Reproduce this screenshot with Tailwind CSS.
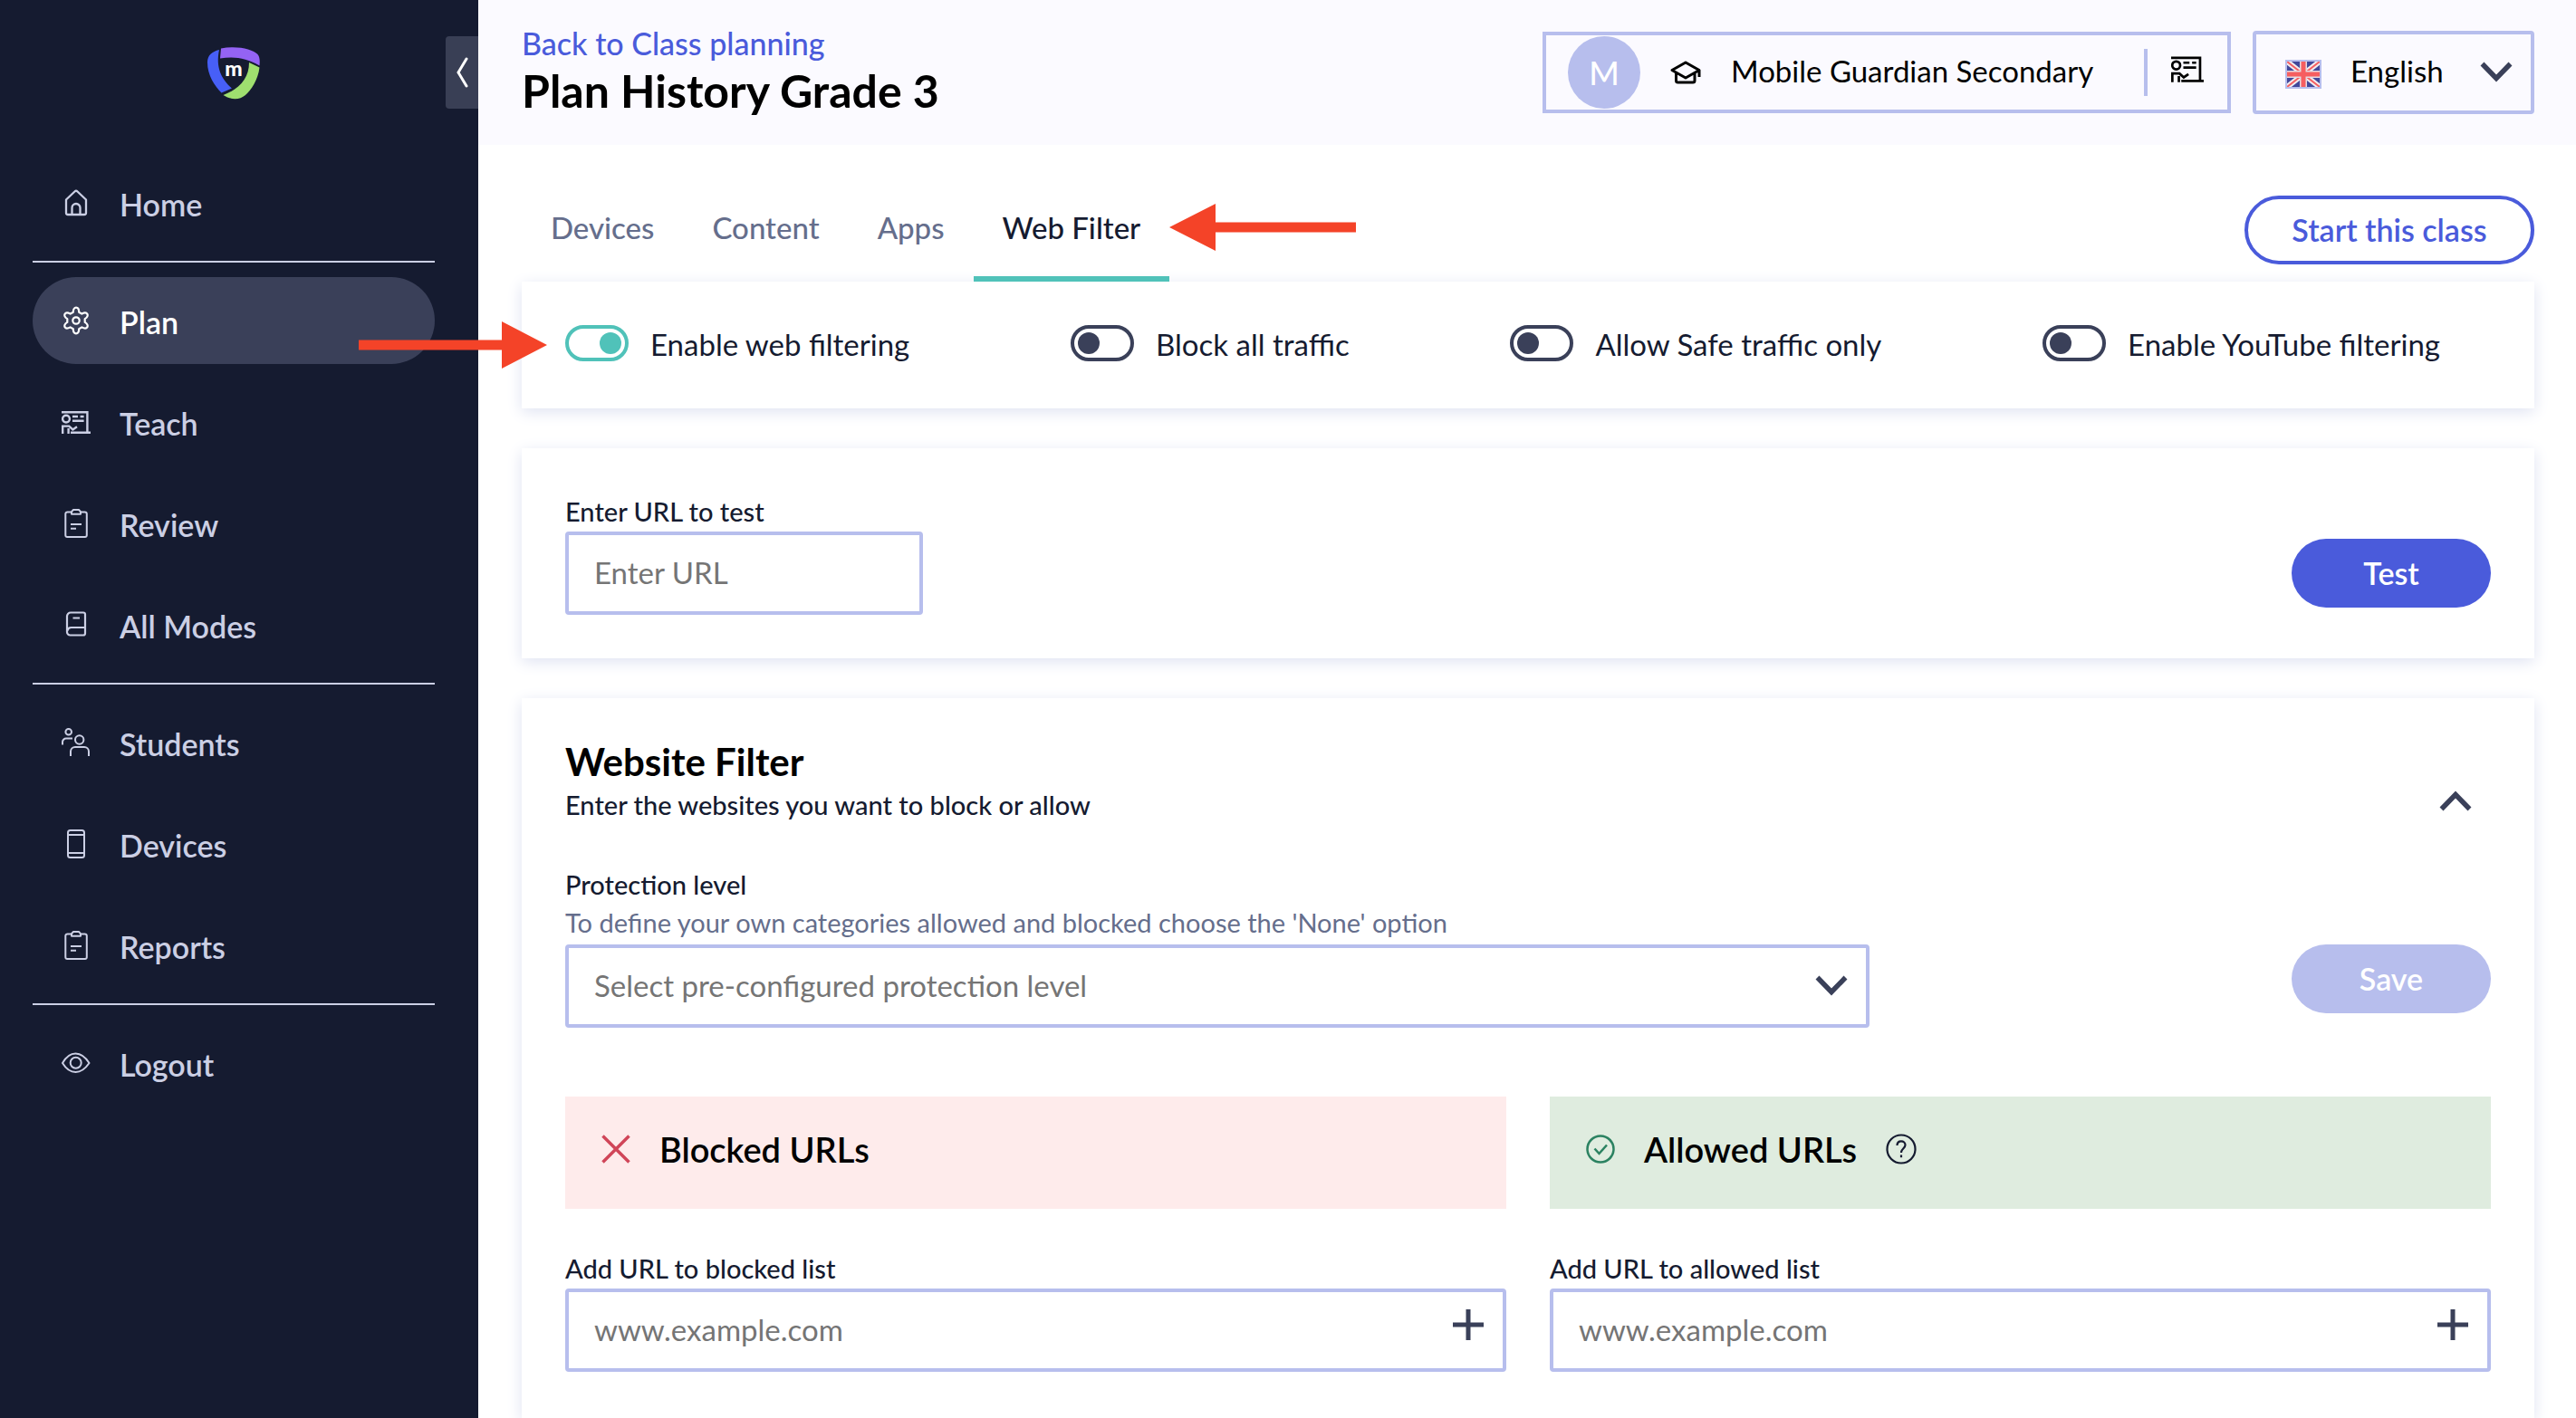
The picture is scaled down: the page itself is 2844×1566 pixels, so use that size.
<!DOCTYPE html>
<html lang="en">
<head>
  <meta charset="UTF-8" />
  <meta name="viewport" content="width=device-width, initial-scale=1.0">
  <title>Plan History Grade 3</title>
  <script src="https://cdn.jsdelivr.net/npm/@tailwindcss/browser@4"></script>
</head>
<body class="flex min-h-screen bg-white font-['Lato',sans-serif] text-[33px] leading-[44px] text-[#151b30]">

  <!-- shared icons -->
  <svg class="hidden">
    <symbol id="icon-teach" viewBox="0 0 32 32">
      <g fill="none" stroke="currentColor" stroke-width="2.4">
        <path d="M0 5.2H28.4V28M10 27.8H32" />
        <circle cx="5" cy="12.6" r="3.9" />
        <path d="M1.2 29V20.6H8.2L12.4 24.4 17 21.2M7.6 29V23M12 10H18M20.6 10H24.6M12 14.8H24.6" />
      </g>
    </symbol>
    <symbol id="icon-clipboard" viewBox="0 0 32 32">
      <g fill="none" stroke="currentColor" stroke-width="2" stroke-linejoin="round">
        <path d="M10.5 3.4H6.5a2.2 2.2 0 0 0-2.200 2.200V29.200a1.800 1.800 0 0 0 1.800 1.800H26a1.800 1.800 0 0 0 1.800-1.800V5.600a2.200 2.200 0 0 0-2.200-2.200H21.500" />
        <path d="M11 5.8V3.200L13 1H19L21 3.200V5.800Z" />
        <path d="M10 17H22M10 21.8H16" />
      </g>
    </symbol>
    <symbol id="icon-chevron" viewBox="0 0 36 24">
      <path d="M2.5 3.5L18 19.500 33.500 3.500" fill="none" stroke="currentColor" stroke-width="5.5" />
    </symbol>
  </svg>

  <aside class="w-[528px] shrink-0 bg-[#151b30] text-[#cbcfe4]">
    <div class="flex h-40 justify-end pt-10">
      <a href="#" aria-label="Mobile Guardian" class="mx-auto pt-3 pl-6">
        <svg class="h-[58px] w-[58px]" viewBox="0 0 58 58">
          <path fill="#475ff7" d="M13 3C5 5 0 9 0 17 0 31 8 43 15.500 50.500L27 45.500C15 35 9 22 13 3Z" />
          <path fill="#9463f4" d="M15 1.500C32-2 50 2 55.500 8 58 11 58 16 57.500 20.500 43 12 30 10 14 12.500Z" />
          <path fill="#9fdf6f" d="M46 17L57.500 22.500C56 36 48 48 42 53 35 59 25 58 17.500 53 36 46 46 34 46 17Z" />
          <text x="29" y="31.5" text-anchor="middle" font-size="23" font-weight="900" fill="#fff">m</text>
        </svg>
      </a>
      <button type="button" aria-label="Collapse menu" class="flex h-20 w-9 items-center justify-center rounded-l bg-[#393f55] text-white">
        <svg class="h-9 w-4" viewBox="0 0 16 36"><path d="M13 3L4 18 13 33" fill="none" stroke="currentColor" stroke-width="3" stroke-linecap="round" /></svg>
      </button>
    </div>

    <nav class="flex flex-col gap-4 pl-9 pr-12 pt-4 text-[34px] font-semibold">
      <a href="#" class="flex h-24 items-center gap-8 rounded-full px-8">
        <svg class="size-8" viewBox="0 0 32 32" fill="none" stroke="currentColor" stroke-width="2.3" stroke-linejoin="round">
          <path d="M5 12.5L14.500 3.500a2.200 2.200 0 0 1 3 0L27 12.500V27a2 2 0 0 1-2 2H7a2 2 0 0 1-2-2Z" />
          <path d="M11.5 29V21.500a4.500 4.500 0 0 1 9 0V29" />
        </svg>
        <span class="pt-1">Home</span>
      </a>
      <hr class="border-t-2 border-[#cbcfe4]">
      <a href="#" aria-current="page" class="flex h-24 items-center gap-8 rounded-full bg-[#3a4059] px-8 text-white">
        <svg class="size-8" viewBox="0 0 32 32" fill="none" stroke="currentColor" stroke-width="2.2" stroke-linejoin="round">
          <path d="M12.8 6.700C12.800 0 19.200 0 19.200 6.700L22.400 8.600C28.300 5.200 31.500 10.800 25.700 14.100V17.900C31.500 21.200 28.300 26.800 22.400 23.400L19.200 25.300C19.200 32 12.800 32 12.800 25.300L9.600 23.400C3.700 26.800 .5 21.200 6.300 17.900V14.100C.5 10.800 3.700 5.200 9.600 8.600Z" />
          <circle cx="16" cy="16" r="3.7" />
        </svg>
        <span class="pt-1">Plan</span>
      </a>
      <a href="#" class="flex h-24 items-center gap-8 rounded-full px-8">
        <svg class="size-8"><use href="#icon-teach" /></svg>
        <span class="pt-1">Teach</span>
      </a>
      <a href="#" class="flex h-24 items-center gap-8 rounded-full px-8">
        <svg class="size-8"><use href="#icon-clipboard" /></svg>
        <span class="pt-1">Review</span>
      </a>
      <a href="#" class="flex h-24 items-center gap-8 rounded-full px-8">
        <svg class="size-8" viewBox="0 0 32 32" fill="none" stroke="currentColor" stroke-width="2.2" stroke-linejoin="round">
          <path d="M10 2.5H24a2 2 0 0 1 2 2V25.500a2 2 0 0 1-2 2H9.500A3.500 3.500 0 0 1 6 24V6.500A4 4 0 0 1 10 2.500Z" />
          <path d="M6.5 22.500C7 19.500 8.500 19 10.500 19H26M12.500 8.500H20" />
        </svg>
        <span class="pt-1">All Modes</span>
      </a>
      <hr class="border-t-2 border-[#cbcfe4]">
      <a href="#" class="flex h-24 items-center gap-8 rounded-full px-8">
        <svg class="size-8" viewBox="0 0 32 32" fill="none" stroke="currentColor" stroke-width="2">
          <circle cx="7.7" cy="4.3" r="3.3" />
          <circle cx="19.7" cy="13" r="4.7" />
          <path d="M1 18.5V15.500a4 4 0 0 1 4-4H12M10 31V26a5 5 0 0 1 5-5H25a5 5 0 0 1 5 5V31" />
        </svg>
        <span class="pt-1">Students</span>
      </a>
      <a href="#" class="flex h-24 items-center gap-8 rounded-full px-8">
        <svg class="size-8" viewBox="0 0 32 32" fill="none" stroke="currentColor" stroke-width="2">
          <rect x="7" y="1" width="18" height="30" rx="2.5" />
          <path d="M7 6H25M7 26H25" />
        </svg>
        <span class="pt-1">Devices</span>
      </a>
      <a href="#" class="flex h-24 items-center gap-8 rounded-full px-8">
        <svg class="size-8"><use href="#icon-clipboard" /></svg>
        <span class="pt-1">Reports</span>
      </a>
      <hr class="border-t-2 border-[#cbcfe4]">
      <a href="#" class="flex h-24 items-center gap-8 rounded-full px-8">
        <svg class="size-8" viewBox="0 0 32 32" fill="none" stroke="currentColor" stroke-width="2" stroke-linejoin="round">
          <path d="M1 16C5 9 10 5.500 15.500 5.500S26 9 30.500 16C26 22.500 21 26 15.500 26S5 22.500 1 16Z" />
          <circle cx="15.7" cy="15.8" r="6" />
        </svg>
        <span class="pt-1">Logout</span>
      </a>
    </nav>
  </aside>

  <main class="flex min-w-0 flex-1 flex-col">
    <header class="flex h-40 items-center justify-between bg-[#fbfaff] pl-12 pr-[46px] text-black">
      <div class="pb-1">
        <a href="#" class="block text-[34px] font-medium text-[#4a5bdb]">Back to Class planning</a>
        <h1 class="text-[50px] font-bold leading-[60px]">Plan History Grade 3</h1>
      </div>
      <div class="flex items-center gap-6">
        <div class="flex h-[90px] w-[760px] items-center border-4 border-[#b7beed] pl-6">
          <span class="flex size-20 items-center justify-center rounded-full bg-[#b7beed] text-[36px] font-medium text-white">M</span>
          <svg class="ml-8 h-7 w-9" viewBox="0 0 36 28" fill="none" stroke="currentColor" stroke-width="3" stroke-linejoin="round">
            <path d="M18 3L33 11.500 18 20 3 11.500ZM7.500 15V23Q7.500 25 9.500 25H26Q28 25 28 23V15M33 11.500V19" />
          </svg>
          <span class="ml-8 pb-1">Mobile Guardian Secondary</span>
          <a href="#" aria-label="Class" class="ml-auto flex h-[52px] items-center border-l-4 border-[#b7beed] px-[26px] pb-2">
            <svg class="size-9"><use href="#icon-teach" /></svg>
          </a>
        </div>
        <div class="relative">
          <select aria-label="Language" class="block h-[92px] w-[311px] appearance-none rounded border-4 border-[#b7beed] pb-1 pl-[104px]">
            <option>English</option>
          </select>
          <svg class="pointer-events-none absolute left-9 top-8 h-8 w-10" viewBox="0 0 40 32">
            <rect width="40" height="32" fill="#b7beed" />
            <svg x="2" y="2" width="36" height="28" viewBox="0 0 36 28">
              <rect width="36" height="28" fill="#42489a" />
              <path d="M0 0L36 28M36 0L0 28" stroke="#f2ecef" stroke-width="6" />
              <path d="M0 0L36 28M36 0L0 28" stroke="#f55f61" stroke-width="2" />
              <path d="M18 0V28M0 14H36" stroke="#e6dbe1" stroke-width="8" />
              <path d="M18 0V28M0 14H36" stroke="#f65e60" stroke-width="5" />
            </svg>
          </svg>
          <svg class="pointer-events-none absolute right-6 top-[33px] h-6 w-9 text-[#3a4059]"><use href="#icon-chevron" /></svg>
        </div>
      </div>
    </header>

    <div class="flex items-end justify-between pl-12 pr-[46px] pt-14">
      <div class="flex font-medium text-[#656e8c]">
        <a href="#" class="border-b-6 border-transparent px-8 pb-8">Devices</a>
        <a href="#" class="border-b-6 border-transparent px-8 pb-8">Content</a>
        <a href="#" class="border-b-6 border-transparent px-8 pb-8">Apps</a>
        <a href="#" class="relative border-b-6 border-[#50c2b9] px-8 pb-8 text-[#151b30]">
          Web Filter
          <svg class="absolute -top-1 left-full h-[52px] w-[206px]" viewBox="0 0 206 52"><path d="M0 26L51 0V20.500H206V31.500H51V52Z" fill="#f44328" /></svg>
        </a>
      </div>
      <button type="button" class="mb-[19px] h-[76px] w-80 rounded-full border-4 border-[#4a5bdb] text-[34px] font-semibold text-[#4a5bdb]">Start this class</button>
    </div>

    <div class="flex flex-1 flex-col gap-11 pl-12 pr-[46px]">
      <section class="flex justify-between bg-white p-12 pr-[104px] shadow-[0_4px_16px_#dfe3f2]">
        <label class="relative flex gap-6 leading-[42px]">
          <input type="checkbox" checked class="h-10 w-[70px] appearance-none rounded-full border-4 border-[#50c2b9] p-1 before:block before:size-6 before:rounded-full before:bg-[#50c2b9] checked:before:translate-x-[30px]">
          Enable web filtering
          <svg class="absolute -top-1 right-full mr-5 h-[52px] w-[208px]" viewBox="0 0 208 52"><path d="M208 26L158 0V20.500H0V31.500H158V52Z" fill="#f44328" /></svg>
        </label>
        <label class="flex gap-6 leading-[42px]">
          <input type="checkbox" class="h-10 w-[70px] appearance-none rounded-full border-4 border-[#3a4059] p-1 before:block before:size-6 before:rounded-full before:bg-[#3a4059] checked:before:translate-x-[30px]">
          Block all traffic
        </label>
        <label class="flex gap-6 leading-[42px]">
          <input type="checkbox" class="h-10 w-[70px] appearance-none rounded-full border-4 border-[#3a4059] p-1 before:block before:size-6 before:rounded-full before:bg-[#3a4059] checked:before:translate-x-[30px]">
          Allow Safe traffic only
        </label>
        <label class="flex gap-6 pb-[2px] leading-[42px]">
          <input type="checkbox" class="h-10 w-[70px] appearance-none rounded-full border-4 border-[#3a4059] p-1 before:block before:size-6 before:rounded-full before:bg-[#3a4059] checked:before:translate-x-[30px]">
          Enable YouTube filtering
        </label>
      </section>

      <section class="flex items-end justify-between bg-white p-12 shadow-[0_4px_16px_#dfe3f2]">
        <div>
          <label for="test-url" class="block text-[29px] font-medium">Enter URL to test</label>
          <input id="test-url" type="text" placeholder="Enter URL" class="block h-[92px] w-[395px] rounded border-4 border-[#b7beed] px-7 pb-[2px] placeholder:text-[#757575]">
        </div>
        <button type="button" class="mb-2 h-[76px] w-[220px] rounded-full bg-[#4a5bdb] text-[34px] font-semibold text-white">Test</button>
      </section>

      <section class="flex-1 bg-white p-12 shadow-[0_4px_16px_#dfe3f2]">
        <div class="flex items-end justify-between">
          <div>
            <h2 class="text-[42px] font-bold text-black">Website Filter</h2>
            <p class="mt-1 text-[29px] font-medium">Enter the websites you want to block or allow</p>
          </div>
          <button type="button" aria-label="Collapse section" class="flex h-[52px] w-[78px] items-center justify-center text-[#3a4059]">
            <svg class="h-6 w-9 rotate-180"><use href="#icon-chevron" /></svg>
          </button>
        </div>

        <div class="mt-11 flex items-end justify-between">
          <div class="w-[1440px]">
            <label for="protection" class="block text-[29px] font-medium">Protection level</label>
            <p class="mb-1 text-[29px] leading-10 text-[#656e8c]">To define your own categories allowed and blocked choose the 'None' option</p>
            <div class="relative">
              <select id="protection" class="block h-[92px] w-full appearance-none rounded border-4 border-[#b7beed] px-7 pb-[2px] text-[#757575]">
                <option>Select pre-configured protection level</option>
              </select>
              <svg class="pointer-events-none absolute right-6 top-[33px] h-6 w-9 text-[#3a4059]"><use href="#icon-chevron" /></svg>
            </div>
          </div>
          <button type="button" disabled class="mb-4 h-[76px] w-[220px] rounded-full bg-[#b7beed] text-[34px] font-semibold text-white">Save</button>
        </div>

        <div class="mt-19 grid grid-cols-2 gap-12">
          <div>
            <div class="flex items-center bg-[#feebeb] px-10 pt-9 pb-11">
              <svg class="size-8" viewBox="0 0 32 32"><path d="M1.5 1.500L30.500 30.500M30.500 1.500L1.500 30.500" stroke="#d04558" stroke-width="3.5" /></svg>
              <h3 class="ml-8 text-[38px] font-semibold text-black">Blocked URLs</h3>
            </div>
            <label for="blocked-url" class="mt-11 block text-[29px] font-medium">Add URL to blocked list</label>
            <div class="relative">
              <input id="blocked-url" type="text" placeholder="www.example.com" class="block h-[92px] w-full rounded border-4 border-[#b7beed] px-7 pb-[2px] placeholder:text-[#757575]">
              <button type="button" aria-label="Add blocked URL" class="absolute right-6 top-[22px] text-[#3a4059]">
                <svg class="size-9" viewBox="0 0 36 36"><path d="M18 1V35M1 18H35" stroke="currentColor" stroke-width="5" /></svg>
              </button>
            </div>
          </div>
          <div>
            <div class="flex items-center bg-[#dfecdf] px-10 pt-9 pb-11">
              <svg class="size-8" viewBox="0 0 32 32" fill="none" stroke="#2b8261" stroke-width="2.5"><circle cx="16" cy="16" r="14.5" /><path d="M9.500 15.500L14.500 21 23 11.500" /></svg>
              <h3 class="ml-8 text-[38px] font-semibold text-black">Allowed URLs</h3>
              <button type="button" aria-label="Help" class="ml-8">
                <svg class="size-[34px]" viewBox="0 0 34 34" fill="none" stroke="#151b30" stroke-width="2.2"><circle cx="17" cy="17" r="15.5" /><path d="M12.500 13C12.500 10 14.500 8.300 17 8.300S21.500 10 21.500 12.500C21.500 16 17 16.500 17 21M17 23.500V26.300" /></svg>
              </button>
            </div>
            <label for="allowed-url" class="mt-11 block text-[29px] font-medium">Add URL to allowed list</label>
            <div class="relative">
              <input id="allowed-url" type="text" placeholder="www.example.com" class="block h-[92px] w-full rounded border-4 border-[#b7beed] px-7 pb-[2px] placeholder:text-[#757575]">
              <button type="button" aria-label="Add allowed URL" class="absolute right-6 top-[22px] text-[#3a4059]">
                <svg class="size-9" viewBox="0 0 36 36"><path d="M18 1V35M1 18H35" stroke="currentColor" stroke-width="5" /></svg>
              </button>
            </div>
          </div>
        </div>
      </section>
    </div>
  </main>
</body>
</html>
